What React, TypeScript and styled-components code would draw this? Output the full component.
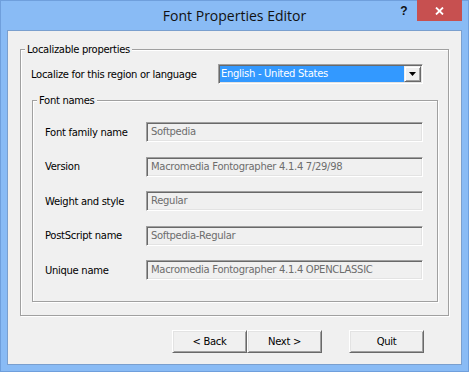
import React from "react";
import styled, { createGlobalStyle } from "styled-components";

const GlobalStyle = createGlobalStyle`
  html, body { margin: 0; padding: 0; background: #ffffff; }
  body { width: 469px; height: 372px; overflow: hidden; }
`;

const Frame = styled.div`
  box-sizing: border-box;
  width: 469px;
  height: 372px;
  background: #89bbf5;
  border: 1px solid #6f9fdc;
  padding: 0 6px 6px;
  display: flex;
  flex-direction: column;
  font-family: "DejaVu Sans", Verdana, sans-serif;
`;

const TitleBar = styled.div`
  height: 29px;
  display: grid;
  grid-template-columns: 1fr auto 1fr;
  align-items: start;
`;

const Title = styled.div`
  grid-column: 2;
  font-family: "Open Sans", "Noto Sans", sans-serif;
  font-size: 14px;
  line-height: 29px;
  color: #111;
  white-space: nowrap;
`;

const Controls = styled.div`
  grid-column: 3;
  display: flex;
  justify-content: flex-end;
  margin-top: -1px;
  height: 21px;
`;

const HelpButton = styled.div`
  width: 26px;
  height: 21px;
  display: flex;
  align-items: center;
  justify-content: center;
  font-family: "Liberation Sans", Arial, sans-serif;
  font-weight: bold;
  font-size: 12px;
  color: #111;
`;

const CloseButton = styled.div`
  width: 45px;
  height: 21px;
  background: #c75050;
  display: flex;
  align-items: center;
  justify-content: center;
`;

const Client = styled.div`
  flex: 1;
  background: #f0f0f0;
  border: 1px solid #7a9fce;
  padding: 12px 0 0 12px;
  display: flex;
  flex-direction: column;
  align-items: flex-start;
  font-size: 10px;
  letter-spacing: -0.3px;
  color: #000;
`;

const Group = styled.fieldset<{ $w: number; $ml?: number; $mt?: number }>`
  box-sizing: border-box;
  width: ${(p) => p.$w}px;
  margin: ${(p) => p.$mt ?? 0}px 0 0 ${(p) => p.$ml ?? 0}px;
  padding: 0;
  min-width: 0;
  border: 1px solid #a0a0a0;
  box-shadow: inset 1px 1px 0 #ffffff, 1px 1px 0 #ffffff;
`;

const Legend = styled.legend`
  margin-left: 4px;
  padding: 0 2px;
  font-size: 10px;
  line-height: 13px;
  background: #f0f0f0;
  color: #000;
`;

const GroupBody = styled.div<{ $pad: string }>`
  padding: ${(p) => p.$pad};
  display: flex;
  flex-direction: column;
  align-items: flex-start;
`;

const Row = styled.div<{ $labelW: number }>`
  display: grid;
  grid-template-columns: ${(p) => p.$labelW}px auto;
  align-items: center;
`;

const Rows = styled.div`
  display: flex;
  flex-direction: column;
  gap: 14.5px;
`;

const Label = styled.span`
  white-space: nowrap;
  line-height: 13px;
`;

const sunken = `
  box-sizing: border-box;
  border-style: solid;
  border-width: 1px;
  border-color: #a0a0a0 #ffffff #ffffff #a0a0a0;
  box-shadow: inset 1px 1px 0 #696969, inset -1px -1px 0 #e3e3e3;
`;

const Select = styled.div`
  ${sunken}
  width: 205px;
  height: 20px;
  padding: 1px;
  background: #ffffff;
  display: flex;
`;

const Selected = styled.div`
  flex: 1;
  background: #3399ff;
  color: #ffffff;
  line-height: 16px;
  padding-left: 1px;
  white-space: nowrap;
`;

const ArrowButton = styled.div`
  box-sizing: border-box;
  width: 17px;
  height: 16px;
  background: #f0f0f0;
  border-style: solid;
  border-width: 1px;
  border-color: #f0f0f0 #696969 #696969 #f0f0f0;
  box-shadow: inset 1px 1px 0 #ffffff, inset -1px -1px 0 #a0a0a0;
  display: flex;
  align-items: center;
  justify-content: center;
`;

const Field = styled.div`
  ${sunken}
  width: 277px;
  height: 20px;
  padding: 1px 0 0 4px;
  background: #f0f0f0;
  color: #6d6d6d;
  line-height: 16px;
  white-space: nowrap;
  overflow: hidden;
`;

const ButtonRow = styled.div`
  display: flex;
  margin: 14px 0 0 152px;
`;

const PushButton = styled.div<{ $gap?: number }>`
  box-sizing: border-box;
  width: 75px;
  height: 23px;
  margin-left: ${(p) => p.$gap ?? 0}px;
  background: #f0f0f0;
  border-style: solid;
  border-width: 1px;
  border-color: #ffffff #696969 #696969 #ffffff;
  box-shadow: inset 1px 1px 0 #e3e3e3, inset -1px -1px 0 #a0a0a0;
  display: flex;
  align-items: center;
  justify-content: center;
  color: #000;
  font-size: 10px;
`;

const fields: [string, string][] = [
  ["Font family name", "Softpedia"],
  ["Version", "Macromedia Fontographer 4.1.4 7/29/98"],
  ["Weight and style", "Regular"],
  ["PostScript name", "Softpedia-Regular"],
  ["Unique name", "Macromedia Fontographer 4.1.4 OPENCLASSIC"],
];

export default function App() {
  return (
    <>
      <GlobalStyle />
      <Frame>
        <TitleBar>
          <Title>Font Properties Editor</Title>
          <Controls>
            <HelpButton>?</HelpButton>
            <CloseButton>
              <svg width="9" height="8" viewBox="0 0 9 8">
                <path d="M1 0.5 L8 7.5 M8 0.5 L1 7.5" stroke="#fff" strokeWidth="1.8" />
              </svg>
            </CloseButton>
          </Controls>
        </TitleBar>
        <Client>
          <Group $w={429}>
            <Legend>Localizable properties</Legend>
            <GroupBody $pad="8px 0 13px 10px">
              <Row $labelW={187}>
                <Label>Localize for this region or language</Label>
                <Select>
                  <Selected>English - United States</Selected>
                  <ArrowButton>
                    <svg width="7" height="4" viewBox="0 0 7 4">
                      <path d="M0 0 H7 L3.5 4 Z" fill="#000" />
                    </svg>
                  </ArrowButton>
                </Select>
              </Row>
              <Group $w={406} $ml={1} $mt={10}>
                <Legend>Font names</Legend>
                <GroupBody $pad="15px 0 21px 12px">
                  <Rows>
                    {fields.map(([label, value]) => (
                      <Row key={label} $labelW={101}>
                        <Label>{label}</Label>
                        <Field>{value}</Field>
                      </Row>
                    ))}
                  </Rows>
                </GroupBody>
              </Group>
            </GroupBody>
          </Group>
          <ButtonRow>
            <PushButton>&lt; Back</PushButton>
            <PushButton>Next &gt;</PushButton>
            <PushButton $gap={27}>Quit</PushButton>
          </ButtonRow>
        </Client>
      </Frame>
    </>
  );
}
